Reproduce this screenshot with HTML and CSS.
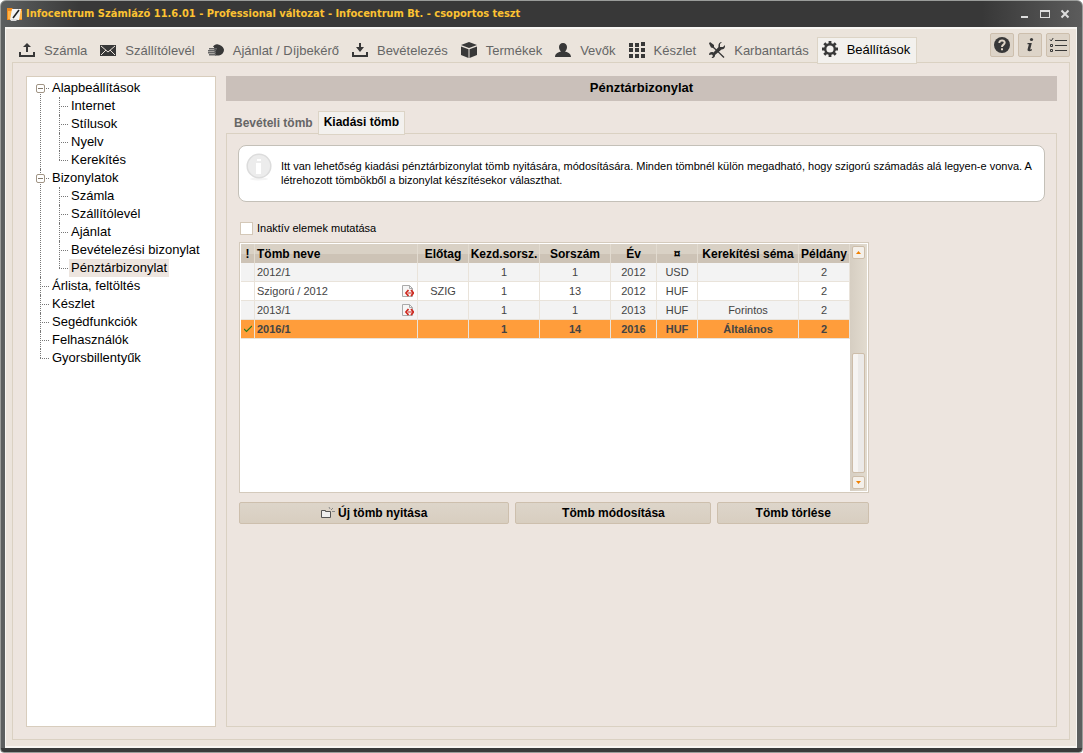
FILE: index.html
```html
<!DOCTYPE html>
<html lang="hu">
<head>
<meta charset="utf-8">
<title>Infocentrum Számlázó</title>
<link rel="stylesheet" href="styles.css">
</head>
<body>
<div class="window">
  <header class="titlebar">
    <svg class="app-icon" width="16" height="16" viewBox="0 0 16 16"><path d="M0 2h5l1 1h9v11H0z" fill="#f08a1c"/><path d="M1 5h14v8H1z" fill="#ffb347"/><path d="M5 3h9l-2 11H3z" fill="#f4f4f4"/><path d="M3 13h8l-2 2H4z" fill="#ddd"/><path d="M12 4L6 12" stroke="#222" stroke-width="1.6"/></svg>
    <h1 class="window-title">Infocentrum Számlázó 11.6.01 - Professional változat - Infocentrum Bt. - csoportos teszt</h1>
    <div class="window-controls">
      <button class="win-btn" aria-label="Kis méret"><svg width="10" height="10" viewBox="0 0 10 10"><path d="M1 7h7v2H1z" fill="#ddd"/></svg></button>
      <button class="win-btn" aria-label="Teljes méret"><svg width="10" height="10" viewBox="0 0 10 10"><path d="M0 1h10v8H0zM1 3v5h8V3z" fill="#ddd" fill-rule="evenodd"/></svg></button>
      <button class="win-btn" aria-label="Bezárás"><svg width="10" height="10" viewBox="0 0 10 10"><path d="M1.500 1.500l7 7M8.500 1.500l-7 7" stroke="#ddd" stroke-width="2"/></svg></button>
    </div>
  </header>

  <div class="client">
    <nav class="toolbar">
      <a class="tool" href="#"><svg width="16" height="16" viewBox="0 0 16 16"><path d="M0 10h2v3h12v-3h2v5H0zM8 1l4 4H9v5H7V5H4z"/></svg>Számla</a>
      <a class="tool" href="#"><svg width="16" height="16" viewBox="0 0 16 16"><path d="M0 3h16v11H0z"/><path d="M1 4l7 6 7-6M1 13l5-5M15 13l-5-5" fill="none" stroke="#ece4dc" stroke-width="1"/></svg>Szállítólevél</a>
      <a class="tool" href="#"><svg width="16" height="16" viewBox="0 0 16 16"><path d="M5 5c1-2 3-3 5-2.500 3 .5 6 3 6 5.500s-2 5-5 5.500H7L6 5z"/><path d="M1 6h8v1.500H1zM0 8h8v1.500H0zM0 10h8v1.500H0zM1 12h7v1.500H1z" fill="#666"/></svg>Ajánlat / Díjbekérő</a>
      <a class="tool" href="#"><svg width="16" height="16" viewBox="0 0 16 16"><path d="M0 10h2v3h12v-3h2v5H0zM7 1h2v4h3l-4 5-4-5h3z"/></svg>Bevételezés</a>
      <a class="tool" href="#"><svg width="16" height="16" viewBox="0 0 16 16"><path d="M8 0l8 3-8 3-8-3zM0 4.500l7.500 2.800V16L0 13zM16 4.500L8.500 7.300V16L16 13z"/></svg>Termékek</a>
      <a class="tool" href="#"><svg width="16" height="16" viewBox="0 0 16 16"><path d="M8 1c2.500 0 4 1.700 4 4s-1 3.500-2 4.500c2 .5 6 1.500 6 5.500H0c0-4 4-5 6-5.500C5 8.500 4 7.300 4 5s1.500-4 4-4z"/></svg>Vevők</a>
      <a class="tool" href="#"><svg width="16" height="16" viewBox="0 0 16 16"><path d="M0 1h4v4H0zM6 1h4v4H6zM12 0h4v4h-4zM0 6h4v4H0zM6 6h4v4H6zM12 6h4v4h-4zM0 12h4v4H0zM6 12h4v4H6zM12 12h4v4h-4z"/></svg>Készlet</a>
      <a class="tool" href="#"><svg width="16" height="16" viewBox="0 0 16 16"><path d="M1 0l4 3v2l10.500 10-1 1L8 9.500 4 6 2 5.500 0 1.500z"/><path d="M13 0l-2 2v3l3 0 2-2c.3 3-1 4.500-3.500 4.500L6 13c.2 2-1.500 3.500-3.500 3L4 14l-1-1.500-3 .5C0 10.500 2 9.500 4.500 10.500L9.500 5C9 2 10.500 0 13 0z"/></svg>Karbantartás</a>
      <a class="tool tool-active" href="#" aria-current="page"><svg width="16" height="16" viewBox="0 0 16 16"><circle cx="8" cy="8" r="4.800" fill="none" stroke="#383838" stroke-width="2.400"/><path d="M8 0v3M8 13v3M0 8h3M13 8h3M2.300 2.300l2 2M11.700 11.700l2 2M2.300 13.700l2-2M11.700 4.300l2-2" stroke="#383838" stroke-width="2.800"/></svg>Beállítások</a>
      <div class="quick">
        <button class="quick-btn" aria-label="Súgó"><svg width="18" height="18" viewBox="0 0 18 18"><circle cx="9" cy="9" r="8"/><path d="M6.300 7c0-3.500 5.600-3.200 5.400-.2C11.600 8.700 9 8.600 9 11" fill="none" stroke="#e0d6c8" stroke-width="2"/><path d="M8 12.300h2v2H8z" fill="#e0d6c8"/></svg></button>
        <button class="quick-btn" aria-label="Információ"><svg width="18" height="18" viewBox="0 0 18 18"><circle cx="10.500" cy="3.500" r="1.600"/><path d="M6.500 7h4.300l-1.500 6c-.2.900.7.700 1.700 0v1.300c-2 1.500-5 1.300-4.400-1L7.900 8.300H6.500z"/></svg></button>
        <button class="quick-btn" aria-label="Lista"><svg width="18" height="18" viewBox="0 0 18 18"><path d="M6 4h12v1H6zM6 9h12v1H6zM6 14h12v1H6z"/><path d="M1 3.500L2.200 5l2-3M1.500 8.500h2v2h-2zM1.500 13.500h2v2h-2z" fill="none" stroke="#383838"/></svg></button>
      </div>
    </nav>

    <div class="workspace">
      <aside class="tree-panel">
        <ul class="tree">
          <li><button class="toggle" aria-label="Alapbeállítások összecsukása"></button><a href="#">Alapbeállítások</a>
            <ul class="branch">
              <li><a href="#">Internet</a></li>
              <li><a href="#">Stílusok</a></li>
              <li><a href="#">Nyelv</a></li>
              <li><a href="#">Kerekítés</a></li>
            </ul>
          </li>
          <li><button class="toggle" aria-label="Bizonylatok összecsukása"></button><a href="#">Bizonylatok</a>
            <ul class="branch">
              <li><a href="#">Számla</a></li>
              <li><a href="#">Szállítólevél</a></li>
              <li><a href="#">Ajánlat</a></li>
              <li><a href="#">Bevételezési bizonylat</a></li>
              <li><a class="selected" href="#">Pénztárbizonylat</a></li>
            </ul>
          </li>
          <li><a href="#">Árlista, feltöltés</a></li>
          <li><a href="#">Készlet</a></li>
          <li><a href="#">Segédfunkciók</a></li>
          <li><a href="#">Felhasználók</a></li>
          <li><a href="#">Gyorsbillentyűk</a></li>
        </ul>
      </aside>

      <main class="main">
        <h2 class="page-title">Pénztárbizonylat</h2>
        <div class="tabs">
          <button class="tab">Bevételi tömb</button>
          <button class="tab tab-active">Kiadási tömb</button>
        </div>
        <section class="tab-page">
          <div class="notice">
            <svg class="notice-icon" width="26" height="28" viewBox="0 0 26 28"><ellipse cx="13" cy="26" rx="9" ry="1.500" fill="#f4f4f4"/><circle cx="13" cy="13" r="11.800" fill="#ececec" stroke="#dcdcdc" stroke-width="1.500"/><path d="M11 6h4v2h-4zM10 10h5v11h-5z" fill="#fff"/></svg>
            <p class="notice-text">Itt van lehetőség kiadási pénztárbizonylat tömb nyitására, módosítására. Minden tömbnél külön megadható, hogy szigorú számadás alá legyen-e vonva. A létrehozott tömbökből a bizonylat készítésekor választhat.</p>
          </div>

          <label class="check"><input type="checkbox">Inaktív elemek mutatása</label>

          <div class="list">
            <div class="grid">
              <table class="records">
                <colgroup><col class="c-mark"><col class="c-name"><col class="c-prefix"><col class="c-num"><col class="c-num"><col class="c-year"><col class="c-cur"><col class="c-round"><col class="c-copy"></colgroup>
                <thead>
                  <tr><th>!</th><th class="name">Tömb neve</th><th>Előtag</th><th>Kezd.sorsz.</th><th>Sorszám</th><th>Év</th><th>¤</th><th>Kerekítési séma</th><th>Példány</th></tr>
                </thead>
                <tbody>
                  <tr><td></td><td class="name">2012/1</td><td></td><td>1</td><td>1</td><td>2012</td><td>USD</td><td></td><td>2</td></tr>
                  <tr><td></td><td class="name"><div class="name-cell">Szigorú / 2012<svg width="12" height="12" viewBox="0 0 12 12"><path d="M.5.500h7l3 3v8H.5z" fill="#f6f6f6" stroke="#aaa"/><path d="M7.500.500v3h3" fill="none" stroke="#aaa"/><path d="M6.500 5L4 8l2.500 3M9 5l2.500 3L9 11" fill="none" stroke="#cf2a20" stroke-width="1.800"/><path d="M6 8h4" stroke="#cf2a20"/></svg></div></td><td>SZIG</td><td>1</td><td>13</td><td>2012</td><td>HUF</td><td></td><td>2</td></tr>
                  <tr><td></td><td class="name"><div class="name-cell">2013/1<svg width="12" height="12" viewBox="0 0 12 12"><path d="M.5.500h7l3 3v8H.5z" fill="#f6f6f6" stroke="#aaa"/><path d="M7.500.500v3h3" fill="none" stroke="#aaa"/><path d="M6.500 5L4 8l2.500 3M9 5l2.500 3L9 11" fill="none" stroke="#cf2a20" stroke-width="1.800"/><path d="M6 8h4" stroke="#cf2a20"/></svg></div></td><td></td><td>1</td><td>1</td><td>2013</td><td>HUF</td><td>Forintos</td><td>2</td></tr>
                  <tr class="current"><td><svg width="8" height="8" viewBox="0 0 8 8"><path d="M0 4l2.500 2.500L8 1" fill="none" stroke="#2c7a1c" stroke-width="1.200"/></svg></td><td class="name">2016/1</td><td></td><td>1</td><td>14</td><td>2016</td><td>HUF</td><td>Általános</td><td>2</td></tr>
                </tbody>
              </table>
              <div class="scrollbar">
                <button class="scroll-btn" aria-label="Fel"><svg width="5" height="3" viewBox="0 0 5 3"><path d="M0 3h5L2.500 0z"/></svg></button>
                <div class="scroll-track"><div class="scroll-thumb"></div></div>
                <button class="scroll-btn" aria-label="Le"><svg width="5" height="3" viewBox="0 0 5 3"><path d="M0 0h5L2.500 3z"/></svg></button>
              </div>
            </div>
            <div class="actions">
              <button class="action action-new"><svg width="14" height="12" viewBox="0 0 14 12"><path d="M.5 10.500v-7h4v1h5v6z" fill="#eee" stroke="#555"/><path d="M8 0l1 2M12 1l-2 2M11 4.500h3" stroke="#888"/></svg>Új tömb nyitása</button>
              <button class="action action-edit">Tömb módosítása</button>
              <button class="action action-delete">Tömb törlése</button>
            </div>
          </div>
        </section>
      </main>
    </div>
  </div>
</div>
</body>
</html>
```
FILE: styles.css
```css
* {
  box-sizing: border-box;
}

body {
  margin: 0;
  background: #fff;
  font: 11px/14px "Liberation Sans", Arial, sans-serif;
  color: #000;
}

button {
  font: inherit;
  color: inherit;
  padding: 0;
  margin: 0;
}

a {
  color: inherit;
  text-decoration: none;
}

svg {
  display: block;
  flex: none;
}

h1, h2, p, ul {
  margin: 0;
  padding: 0;
}

.window {
  display: flex;
  flex-direction: column;
  min-height: 100vh;
  border: 1px solid #9a9c9a;
  border-radius: 6px 6px 4px 4px;
  padding: 0 5px 4px 4px;
  background: linear-gradient(90deg, #5c5f5f, #383838 80px, #383838 calc(100% - 100px), #5c5c5c) 0 0 / 100% 26px no-repeat,
    linear-gradient(#5c5f5f calc(100% - 4px), #383a3a 0);
}

.titlebar {
  display: flex;
  align-items: center;
  height: 26px;
  padding: 0 7px 0 2px;
}

.window-title {
  flex: 1;
  margin-left: 3px;
  font: bold 11px/14px "DejaVu Sans Condensed", "Noto Sans", Tahoma, sans-serif;
  color: #fcc232;
}

.window-controls {
  display: flex;
  gap: 10px;
}

.win-btn {
  border: 0;
  background: none;
}

.client {
  flex: 1;
  display: flex;
  flex-direction: column;
  padding: 8px 6px 6px;
  border: 1px solid #f8f6f2;
  border-width: 2px 1px;
  background: #ebe4dc;
}

.toolbar {
  display: flex;
  align-items: flex-end;
  position: relative;
  height: 26px;
  margin-bottom: -1px;
  padding-left: 2px;
  font-size: 13px;
  line-height: 16px;
  color: #666;
}

.tool {
  display: flex;
  align-items: center;
  gap: 9px;
  height: 25px;
  padding: 0 8px 0 5px;
  white-space: nowrap;
}

.tool svg {
  margin-bottom: 2px;
}

.tool svg,
.quick-btn svg {
  fill: #383838;
}

.tool-active {
  height: 27px;
  margin-bottom: -1px;
  padding: 0 6px 2px 4px;
  border: 1px solid #dcd4c6;
  background: #f3f1ee;
  color: #000;
}

.quick {
  display: flex;
  gap: 4px;
  align-self: flex-start;
  margin: -4px 0 0 auto;
}

.quick-btn {
  display: grid;
  place-items: center;
  width: 24px;
  height: 24px;
  border: 1px solid #cdbfad;
  border-radius: 2px;
  background: #ddd4c8;
}

.workspace {
  flex: 1;
  display: flex;
  gap: 10px;
  padding: 13px 12px 12px 13px;
  border: 1px solid #dad1c2;
  background: #ede5df;
}

.tree-panel {
  flex: none;
  width: 190px;
  padding: 2px 0 0 8px;
  border: 1px solid #d8cdbd;
  background: #fff;
}

.tree,
.branch {
  list-style: none;
}

.tree {
  font-size: 13px;
  line-height: 18px;
}

.tree li {
  position: relative;
  padding-left: 15px;
}

.tree a {
  display: block;
  width: max-content;
  padding: 0 2px;
}

.tree li::before {
  content: "";
  position: absolute;
  left: 5px;
  top: 0;
  bottom: 0;
  border-left: 1px dotted #777;
}

.tree li::after {
  content: "";
  position: absolute;
  left: 5px;
  top: 9px;
  width: 9px;
  border-top: 1px dotted #777;
}

.tree > li:first-child::before {
  top: 9px;
}

.tree li:last-child::before {
  bottom: auto;
  height: 9px;
}

.tree .branch li {
  padding-left: 19px;
}

.tree .branch li::before,
.tree .branch li::after {
  left: 9px;
}

.tree .selected {
  background: #ede5df;
}

.toggle {
  position: absolute;
  z-index: 1;
  left: 1px;
  top: 5px;
  width: 9px;
  height: 9px;
  border: 1px solid #a09484;
  border-radius: 2px;
  background: linear-gradient(#857a6c, #857a6c) center / 5px 1px no-repeat #fff;
}

.main {
  flex: 1;
  min-width: 0;
  display: flex;
  flex-direction: column;
}

.page-title {
  padding: 4px 0 5px;
  background: #cac0ba;
  font-size: 13px;
  line-height: 16px;
  text-align: center;
}

.tabs {
  display: flex;
  align-items: flex-end;
  position: relative;
  margin: 10px 0 -2px;
  padding-left: 2px;
}

.tab {
  height: 24px;
  padding: 0 5px 0 6px;
  border: 0;
  background: none;
  font-size: 12px;
  font-weight: bold;
  color: #666;
}

.tab-active {
  padding: 0 5px 2px;
  border: 1px solid #dcd4c6;
  background: #f3f1ee;
  color: #000;
}

.tab-page {
  flex: 1;
  padding: 11px;
  border: 1px solid #dad1c2;
}

.notice {
  display: flex;
  gap: 9px;
  min-height: 57px;
  padding: 7px;
  border: 1px solid #c4c0b8;
  border-radius: 8px;
  background: #fff;
}

.notice-text {
  padding-top: 6px;
}

.check {
  display: flex;
  align-items: center;
  gap: 4px;
  width: max-content;
  margin: 19px 0 7px 2px;
}

.check input {
  appearance: none;
  width: 13px;
  height: 13px;
  margin: 0;
  border: 1px solid #d4c8b8;
  background: #fff;
}

.list {
  max-width: 630px;
  margin-left: 1px;
}

.grid {
  display: flex;
  align-items: stretch;
  min-height: 251px;
  padding: 1px;
  border: 1px solid #d4cabc;
  background: #fff;
}

.records {
  flex: 1;
  align-self: flex-start;
  table-layout: fixed;
  border-collapse: separate;
  border-spacing: 0;
  color: #444;
}

.c-mark { width: 14px; }
.c-name { width: 163px; }
.c-prefix { width: 51px; }
.c-num { width: 71px; }
.c-year { width: 46px; }
.c-cur { width: 41px; }
.c-round { width: 101px; }
.c-copy { width: 51px; }

.records th,
.records td {
  padding: 0;
  text-align: center;
  white-space: nowrap;
}

.records th {
  height: 19px;
  border-right: 1px solid #e2dbd0;
  background: linear-gradient(#d9d1c5 50%, #cdc3b6 55%, #cdc3b6);
  font-size: 12px;
  color: #000;
}

.records td {
  height: 19px;
  border: 1px solid #e9e3da;
  border-width: 0 1px 1px 0;
}

.records .name {
  padding-left: 2px;
  text-align: left;
}

.records tbody tr:nth-child(odd) {
  background: #f3f3f3;
}

.records tbody .current {
  background: #ff9d3b;
  font-weight: bold;
}

.current svg {
  margin: 0 auto;
}

.name-cell {
  display: flex;
  justify-content: space-between;
  align-items: center;
  padding-right: 3px;
}

.scrollbar {
  display: flex;
  flex-direction: column;
  align-items: center;
  gap: 3px;
  width: 17px;
  padding: 2px 0;
  background: linear-gradient(90deg, #d6cec2, #e2dbcf);
}

.scroll-btn {
  display: grid;
  place-items: center;
  width: 13px;
  height: 13px;
  border: 1px solid #cdbda9;
  border-radius: 2px;
  background: #f4f0ea;
}

.scroll-btn svg {
  fill: #f08000;
}

.scroll-track {
  flex: 1;
  display: flex;
  align-items: flex-end;
}

.scroll-thumb {
  width: 13px;
  height: 57%;
  border: 1px solid #cdbda9;
  border-radius: 2px;
  background: linear-gradient(90deg, #f6f4f2 50%, #eceae8 50%);
}

.actions {
  display: flex;
  gap: 6px;
  margin-top: 9px;
}

.action {
  display: flex;
  align-items: center;
  justify-content: center;
  gap: 3px;
  height: 22px;
  border: 1px solid #cdbfad;
  border-radius: 2px;
  background: linear-gradient(#ddd5ca, #d8cec0);
  font-size: 12px;
  font-weight: bold;
}

.action-new { flex: 271 0 0; }
.action-edit { flex: 196 0 0; }
.action-delete { flex: 151 0 0; }
```
